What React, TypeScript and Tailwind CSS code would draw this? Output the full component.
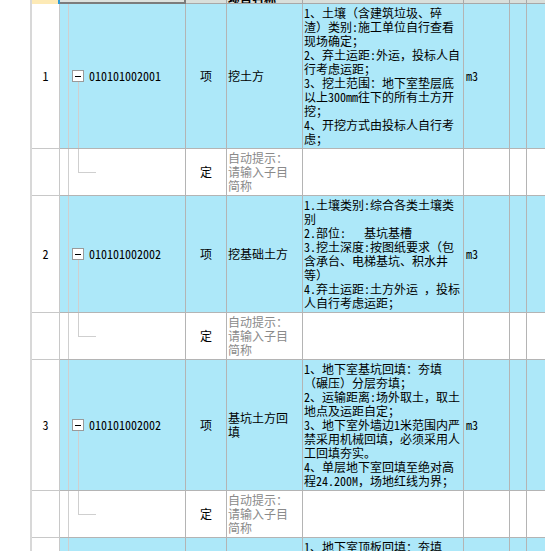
const FONT = "font-['Noto_Sans_Mono_CJK_SC','Noto_Sans_CJK_SC',sans-serif]"

interface Item {
  no: string
  code: string
  name: string[]
  desc: string[]
  unit: string
}

const items: Item[] = [
  {
    no: '1',
    code: '010101002001',
    name: ['挖土方'],
    desc: [
      '1、土壤（含建筑垃圾、碎',
      '渣）类别:施工单位自行查看',
      '现场确定；',
      '2、弃土运距:外运，投标人自',
      '行考虑运距；',
      '3、挖土范围：地下室垫层底',
      '以上300mm往下的所有土方开',
      '挖；',
      '4、开挖方式由投标人自行考',
      '虑；',
    ],
    unit: 'm3',
  },
  {
    no: '2',
    code: '010101002002',
    name: ['挖基础土方'],
    desc: [
      '1.土壤类别:综合各类土壤类',
      '别',
      '2.部位:   基坑基槽',
      '3.挖土深度:按图纸要求（包',
      '含承台、电梯基坑、积水井',
      '等）',
      '4.弃土运距:土方外运 ，投标',
      '人自行考虑运距；',
    ],
    unit: 'm3',
  },
  {
    no: '3',
    code: '010101002002',
    name: ['基坑土方回', '填'],
    desc: [
      '1、地下室基坑回填：夯填',
      '（碾压）分层夯填；',
      '2、运输距离:场外取土，取土',
      '地点及运距自定；',
      '3、地下室外墙边1米范围内严',
      '禁采用机械回填，必须采用人',
      '工回填夯实。',
      '4、单层地下室回填至绝对高',
      '程24.200M，场地红线为界；',
    ],
    unit: 'm3',
  },
]

// last row, only its first line shows in the window
const lastItem: Item = {
  no: '4',
  code: '010103001002',
  name: ['顶板土方回', '填'],
  desc: [
    '1、地下室顶板回填：夯填',
    '（碾压）分层夯填；',
    '2、运输距离:场外取土，取土',
    '地点及运距自定；',
    '3、回填材料:采用素土回填',
    '分层夯实；',
    '4、单层地下室回填至绝对高',
    '程24.200M，场地红线为界；',
  ],
  unit: 'm3',
}

function MinusBox() {
  return (
    <div className="w-[12px] h-[12px] shrink-0 border border-[#9a9a9a] bg-white flex items-center justify-center">
      <div className="w-[6px] h-[1px] bg-black" />
    </div>
  )
}

function ItemRow({ item }: { item: Item }) {
  return (
    <div className="flex">
      <div className="w-[28px] shrink-0 border-r border-b border-[#c8c8c8] bg-white flex items-center justify-center">
        {item.no}
      </div>
      <div className="w-[126px] shrink-0 border-r border-b border-[#b4b4b4] bg-[#ade8f9] flex">
        <div className="w-[9px] shrink-0 border-r border-[#cfcfcf]" />
        <div className="flex-1 flex flex-col">
          <div className="flex-1" />
          <div className="h-[12px] flex items-center">
            <div className="ml-[3px]"><MinusBox /></div>
            <span className="ml-[5px] leading-[12px]">{item.code}</span>
          </div>
          <div className="flex-1 ml-[9px] border-l border-[#cfcfcf]" />
        </div>
      </div>
      <div className="w-[41px] shrink-0 border-r border-b border-[#b4b4b4] bg-[#ade8f9] flex items-center justify-center">
        项
      </div>
      <div className="w-[76px] shrink-0 border-r border-b border-[#b4b4b4] bg-[#ade8f9] flex flex-col justify-center pl-[1px]">
        {item.name.map((n, i) => (
          <div key={i} className="whitespace-nowrap">{n}</div>
        ))}
      </div>
      <div className="w-[161px] shrink-0 border-r border-b border-[#b4b4b4] bg-[#ade8f9] py-[2px] pl-[1px] overflow-hidden">
        {item.desc.map((d, i) => (
          <div key={i} className="whitespace-pre">{d}</div>
        ))}
      </div>
      <div className="w-[46px] shrink-0 border-r border-b border-[#b4b4b4] bg-[#ade8f9] flex items-center pl-[2px]">
        {item.unit}
      </div>
      <div className="w-[17px] shrink-0 border-r border-b border-[#b4b4b4] bg-[#ade8f9]" />
      <div className="flex-1 border-b border-[#b4b4b4] bg-[#ade8f9]" />
    </div>
  )
}

function ChildRow() {
  return (
    <div className="flex bg-white">
      <div className="w-[28px] shrink-0 border-r border-b border-[#c8c8c8]" />
      <div className="w-[126px] shrink-0 border-r border-b border-[#b4b4b4] flex">
        <div className="w-[9px] shrink-0 border-r border-[#cfcfcf]" />
        <div className="flex-1 flex flex-col">
          <div className="flex-1 ml-[9px] w-[18px] border-l border-b border-[#cfcfcf]" />
          <div className="flex-1" />
        </div>
      </div>
      <div className="w-[41px] shrink-0 border-r border-b border-[#b4b4b4] flex items-center justify-center">
        定
      </div>
      <div className="w-[76px] shrink-0 border-r border-b border-[#b4b4b4] py-[2px] pl-[1px] text-[#8a8a8a]">
        <div>自动提示：</div>
        <div>请输入子目</div>
        <div>简称</div>
      </div>
      <div className="w-[161px] shrink-0 border-r border-b border-[#b4b4b4]" />
      <div className="w-[46px] shrink-0 border-r border-b border-[#b4b4b4]" />
      <div className="w-[17px] shrink-0 border-r border-b border-[#b4b4b4]" />
      <div className="flex-1 border-b border-[#b4b4b4]" />
    </div>
  )
}

function HeaderStrip() {
  return (
    <div className="flex h-[4px] shrink-0 overflow-hidden">
      <div className="w-[28px] shrink-0 bg-[#fdeab6] border-r-2 border-[#2b9ad8]" />
      <div className="w-[126px] shrink-0 bg-[#dde2de] border-r-2 border-b-2 border-[#7c7c7c]" />
      <div className="w-[41px] shrink-0 bg-[#d9dfdb] border-r border-b border-[#a8a8a8]" />
      <div className="w-[76px] shrink-0 bg-[#d9dfdb] border-r border-b border-[#a8a8a8] overflow-hidden flex items-end pl-[1px]">
        <div className="leading-[14px] font-bold whitespace-nowrap -mb-[3px]">项目名称</div>
      </div>
      <div className="w-[161px] shrink-0 bg-[#d9dfdb] border-r border-b border-[#a8a8a8]" />
      <div className="w-[46px] shrink-0 bg-[#d9dfdb] border-r border-b border-[#a8a8a8]" />
      <div className="w-[17px] shrink-0 bg-[#d9dfdb] border-r border-b border-[#a8a8a8]" />
      <div className="flex-1 bg-[#d9dfdb] border-b border-[#a8a8a8]" />
    </div>
  )
}

export default function App() {
  return (
    <div className={`w-[545px] h-[551px] overflow-hidden bg-white flex text-[12px] leading-[14px] text-black ${FONT}`}>
      <div className="w-[30px] shrink-0 bg-white" />
      <div className="w-[2px] shrink-0 bg-[#d8d8d8]" />
      <div className="flex-1 flex flex-col min-w-0">
        <HeaderStrip />
        {items.map((item, i) => (
          <div key={i}>
            <ItemRow item={item} />
            <ChildRow />
          </div>
        ))}
        <ItemRow item={lastItem} />
      </div>
    </div>
  )
}
